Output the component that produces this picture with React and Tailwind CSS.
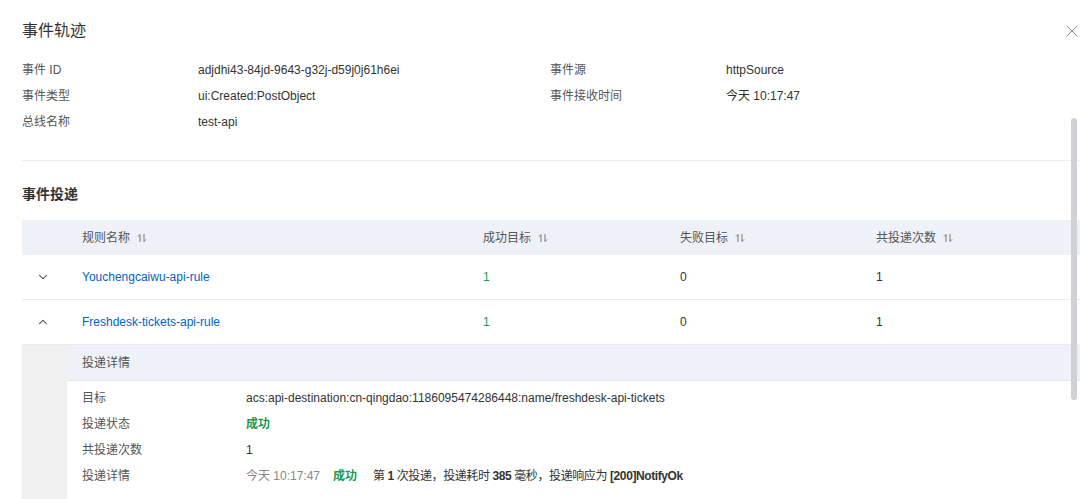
import { ChevronDown, ChevronUp, X } from "lucide-react";

const font = { fontFamily: '"Liberation Sans", "Noto Sans CJK SC", sans-serif' };

function SortIcon() {
  return (
    <svg width="10" height="10" viewBox="0 0 10 10" className="ml-[7px] inline-block" fill="none" stroke="#777" strokeWidth="1">
      <path d="M3 9V1.5M1 3.5L3 1.5" />
      <path d="M7 1v7.5M9 6.5L7 8.5" />
    </svg>
  );
}

function InfoRow({ label, value }) {
  return (
    <div className="flex h-[26px] items-center text-[12px]">
      <div className="w-[176px] text-[#555]">{label}</div>
      <div className="text-[#333]">{value}</div>
    </div>
  );
}

const cols = ["w-[45px]", "w-[401px]", "w-[197px]", "w-[196px]", "flex-1"];

export default function App() {
  return (
    <div className="relative h-[499px] w-[1080px] overflow-hidden bg-white" style={font}>
      <div className="flex h-[57px] items-center justify-between pt-[5px] pl-[22px]">
        <h1 className="text-[16px] text-[#333]">事件轨迹</h1>
        <X size={20} strokeWidth={1} className="mr-[-2px] text-[#777]" />
      </div>

      <div className="ml-[22px] flex border-b border-[#eceef2] pb-[25px]">
        <div className="w-[528px]">
          <InfoRow label="事件 ID" value="adjdhi43-84jd-9643-g32j-d59j0j61h6ei" />
          <InfoRow label="事件类型" value="ui:Created:PostObject" />
          <InfoRow label="总线名称" value="test-api" />
        </div>
        <div>
          <InfoRow label="事件源" value="httpSource" />
          <InfoRow label="事件接收时间" value="今天 10:17:47" />
        </div>
      </div>

      <div className="ml-[22px]">
        <h2 className="flex h-[59px] items-center pt-[8px] text-[14px] font-bold text-[#333]">事件投递</h2>

        <div className="flex h-[35px] items-center bg-[#eef1f7] text-[12px] text-[#555]">
          <div className={cols[0]} />
          <div className={`${cols[1]} flex items-center pl-[15px]`}>规则名称<SortIcon /></div>
          <div className={`${cols[2]} flex items-center pl-[15px]`}>成功目标<SortIcon /></div>
          <div className={`${cols[3]} flex items-center pl-[15px]`}>失败目标<SortIcon /></div>
          <div className={`${cols[4]} flex items-center pl-[15px]`}>共投递次数<SortIcon /></div>
        </div>

        {[
          { name: "Youchengcaiwu-api-rule", open: false },
          { name: "Freshdesk-tickets-api-rule", open: true },
        ].map((r) => (
          <div key={r.name} className="flex h-[45px] items-center border-b border-[#e8eaee] text-[12px]">
            <div className={`${cols[0]} flex justify-center pr-[3px]`}>
              {r.open ? (
                <ChevronUp size={14} strokeWidth={1.8} className="text-[#333]" />
              ) : (
                <ChevronDown size={14} strokeWidth={1.8} className="text-[#333]" />
              )}
            </div>
            <div className={`${cols[1]} pl-[15px] text-[#0064c8]`}>{r.name}</div>
            <div className={`${cols[2]} pl-[15px] text-[#1a9b51]`}>1</div>
            <div className={`${cols[3]} pl-[15px] text-[#333]`}>0</div>
            <div className={`${cols[4]} pl-[15px] text-[#333]`}>1</div>
          </div>
        ))}

        <div className="flex">
          <div className="w-[45px] shrink-0 bg-[#f0f0f0]" />
          <div className="flex-1 pb-[20px]">
            <div className="flex h-[36px] items-center border-b border-[#e4e6ea] bg-[#eef1f7] pl-[15px] text-[12px] text-[#555]">
              投递详情
            </div>
            <div className="pt-[4px] pl-[15px] text-[12px]">
              {[
                ["目标", <span className="text-[#333]">acs:api-destination:cn-qingdao:1186095474286448:name/freshdesk-api-tickets</span>],
                ["投递状态", <span className="font-bold text-[#1a9b51]">成功</span>],
                ["共投递次数", <span className="text-[#333]">1</span>],
                [
                  "投递详情",
                  <span className="flex items-center text-[#333]">
                    <span className="w-[87px] text-[#888]">今天 10:17:47</span>
                    <span className="w-[40px] font-bold text-[#1a9b51]">成功</span>
                    <span className="tracking-[-0.4px]">
                      第 <b>1</b> 次投递，投递耗时 <b>385</b> 毫秒，投递响应为 <b>[200]NotifyOk</b>
                    </span>
                  </span>,
                ],
              ].map(([label, value]) => (
                <div key={label} className="flex h-[26px] items-center">
                  <div className="w-[164px] text-[#555]">{label}</div>
                  {value}
                </div>
              ))}
            </div>
          </div>
        </div>
      </div>

      <div className="absolute top-[118px] right-[3px] h-[282px] w-[6px] rounded-full bg-[#cfd1d4]" />
    </div>
  );
}
